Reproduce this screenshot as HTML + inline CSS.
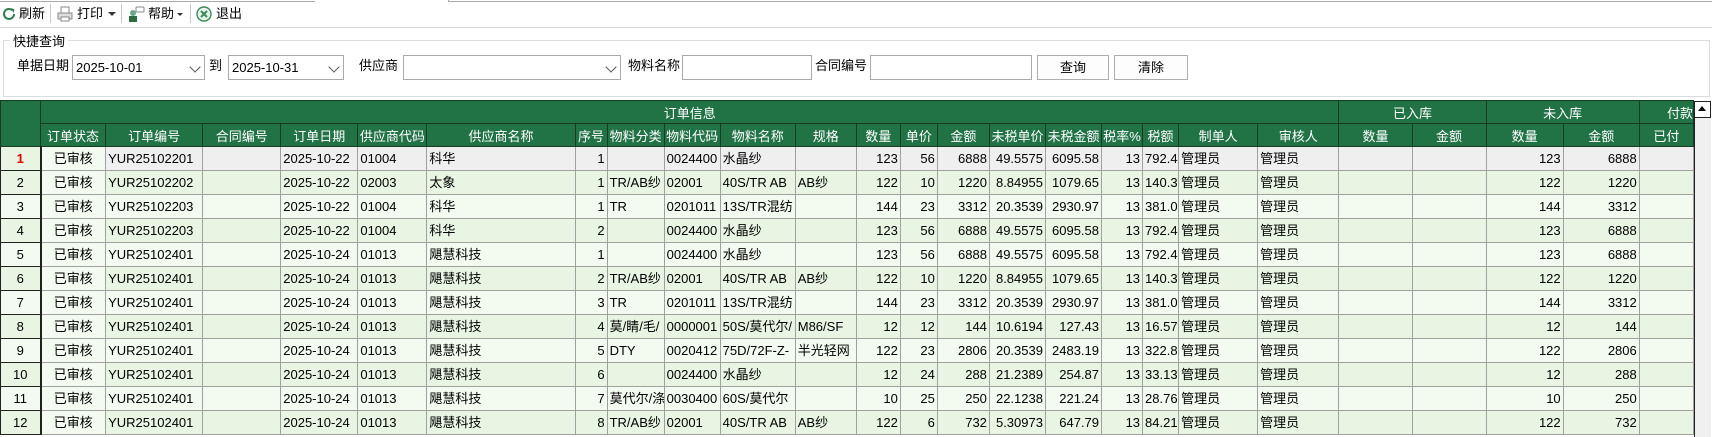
<!DOCTYPE html>
<html><head><meta charset="utf-8"><style>
*{margin:0;padding:0;box-sizing:border-box}
body{width:1712px;height:437px;overflow:hidden;background:#fff;font-family:"Liberation Sans","Noto Sans CJK SC",sans-serif;font-size:13px;color:#000;position:relative}
.abs{position:absolute}
.tb{top:0;left:0;width:1712px;height:28px;border-bottom:1px solid #d8d8d8}
.tbi{position:absolute;top:5px;font-size:13px;height:18px;line-height:18px}
.sep{position:absolute;top:4px;width:1px;height:19px;background:#c8c8c8}
.grp{left:3px;top:40px;width:1707px;height:57px;border:1px solid #dcdcdc}
.gl{left:10px;top:31px;background:#fff;padding:0 3px;font-size:13px}
.lbl{top:57px;font-size:13px;line-height:18px}
.inp{top:55px;height:25px;border:1px solid #aaa;background:#fff;font-size:13px;line-height:23px;padding-left:3px}
.dd{position:absolute;right:5px;top:7px;width:8px;height:8px;border-right:1px solid #555;border-bottom:1px solid #555;transform:rotate(45deg)}
.btn{top:55px;height:25px;border:1px solid #adadad;background:#fdfdfd;text-align:center;line-height:23px;font-size:13px}
table{position:absolute;left:0;top:100px;border-collapse:collapse;table-layout:fixed;width:1694px}
td{height:24px;border:1px solid #a0a0a0;white-space:nowrap;overflow:hidden;padding:0 2px;font-size:13px;line-height:22px}
th{background:#217346;color:#fff;font-weight:normal;border:1px solid #163c24;font-size:13px;height:23px;white-space:nowrap;overflow:hidden}
td.rh{border:1px solid #222;border-right:2px solid #222;background:#e8f5e3;text-align:center}
td.c{text-align:center}
td.r{text-align:right}
tr.a td{background:#e8f5e3}
tr.b td{background:#f3faf0}
tr.g td{background:#efefef}
tr td.st{background:#f3faf0}
tr.g td.rh{background:#e8f5e3;color:#e00000;font-weight:bold}
</style></head><body>
<div class="abs" style="top:0;left:0;width:315px;height:2px;border-bottom:1px solid #aaa"></div>
<div class="abs" style="top:0;left:448px;width:1264px;height:2px;border-bottom:1px solid #aaa;border-left:1px solid #aaa"></div>
<div class="abs tb"></div>
<svg class="abs" style="left:2px;top:7px" width="14" height="14" viewBox="0 0 14 14"><path d="M12 7a5 5 0 1 1-1.6-3.7" fill="none" stroke="#2e7d4e" stroke-width="2"/><path d="M9 1l3.5 1.5-1 3.5z" fill="#2e7d4e"/></svg>
<div class="tbi" style="left:19px">刷新</div>
<div class="sep" style="left:50px"></div>
<svg class="abs" style="left:57px;top:6px" width="16" height="16" viewBox="0 0 16 16"><rect x="4" y="1" width="8" height="6" fill="#fff" stroke="#888"/><rect x="1" y="7" width="14" height="6" fill="#ddd" stroke="#888"/><rect x="4" y="11" width="8" height="4" fill="#fff" stroke="#888"/></svg>
<div class="tbi" style="left:77px">打印</div>
<div class="abs" style="left:108px;top:12px;border:4px solid transparent;border-top:4px solid #333"></div>
<div class="sep" style="left:121px"></div>
<svg class="abs" style="left:127px;top:5px" width="18" height="18" viewBox="0 0 18 18"><circle cx="6" cy="8" r="3" fill="#6a8"/><rect x="2" y="11" width="8" height="6" fill="#2e6d44"/><rect x="9" y="2" width="8" height="5" rx="1" fill="#fff" stroke="#888"/></svg>
<div class="tbi" style="left:148px">帮助</div>
<div class="abs" style="left:177px;top:13px;border:3px solid transparent;border-top:3px solid #333"></div>
<div class="sep" style="left:190px"></div>
<svg class="abs" style="left:196px;top:6px" width="16" height="16" viewBox="0 0 16 16"><circle cx="8" cy="8" r="7" fill="#e8f3ec" stroke="#3a8a5a" stroke-width="1.4"/><path d="M5 5l6 6M11 5l-6 6" stroke="#3a8a5a" stroke-width="2"/></svg>
<div class="tbi" style="left:216px">退出</div>

<div class="abs grp"></div>
<div class="abs gl">快捷查询</div>
<div class="abs lbl" style="left:17px">单据日期</div>
<div class="abs inp" style="left:72px;width:133px">2025-10-01<span class="dd"></span></div>
<div class="abs lbl" style="left:209px">到</div>
<div class="abs inp" style="left:228px;width:116px">2025-10-31<span class="dd"></span></div>
<div class="abs lbl" style="left:359px">供应商</div>
<div class="abs inp" style="left:403px;width:218px"><span class="dd"></span></div>
<div class="abs lbl" style="left:628px">物料名称</div>
<div class="abs inp" style="left:682px;width:130px"></div>
<div class="abs lbl" style="left:815px">合同编号</div>
<div class="abs inp" style="left:870px;width:162px"></div>
<div class="abs btn" style="left:1037px;width:72px">查询</div>
<div class="abs btn" style="left:1114px;width:74px">清除</div>

<table>
<colgroup><col style="width:40px"><col style="width:65px"><col style="width:97px"><col style="width:78px"><col style="width:77px"><col style="width:69px"><col style="width:148px"><col style="width:32px"><col style="width:57px"><col style="width:56px"><col style="width:75px"><col style="width:61px"><col style="width:44px"><col style="width:37px"><col style="width:52px"><col style="width:56px"><col style="width:56px"><col style="width:41px"><col style="width:36px"><col style="width:79px"><col style="width:81px"><col style="width:73px"><col style="width:74px"><col style="width:77px"><col style="width:76px"><col style="width:54px"></colgroup>
<tr><th rowspan="2"></th><th colspan="20">订单信息</th><th colspan="2">已入库</th><th colspan="2">未入库</th><th style="text-align:right">付款</th></tr>
<tr><th>订单状态</th><th>订单编号</th><th>合同编号</th><th>订单日期</th><th>供应商代码</th><th>供应商名称</th><th>序号</th><th>物料分类</th><th>物料代码</th><th>物料名称</th><th>规格</th><th>数量</th><th>单价</th><th>金额</th><th>未税单价</th><th>未税金额</th><th>税率%</th><th>税额</th><th>制单人</th><th>审核人</th><th>数量</th><th>金额</th><th>数量</th><th>金额</th><th>已付</th></tr>
<tr class="g"><td class="rh">1</td><td class="c st">已审核</td><td>YUR25102201</td><td></td><td>2025-10-22</td><td>01004</td><td>科华</td><td class="r">1</td><td></td><td>0024400</td><td>水晶纱</td><td></td><td class="r">123</td><td class="r">56</td><td class="r">6888</td><td class="r">49.5575</td><td class="r">6095.58</td><td class="r">13</td><td class="r">792.4</td><td>管理员</td><td>管理员</td><td></td><td></td><td class="r">123</td><td class="r">6888</td><td></td></tr>
<tr class="a"><td class="rh">2</td><td class="c st">已审核</td><td>YUR25102202</td><td></td><td>2025-10-22</td><td>02003</td><td>太象</td><td class="r">1</td><td>TR/AB纱</td><td>02001</td><td>40S/TR AB</td><td>AB纱</td><td class="r">122</td><td class="r">10</td><td class="r">1220</td><td class="r">8.84955</td><td class="r">1079.65</td><td class="r">13</td><td class="r">140.3</td><td>管理员</td><td>管理员</td><td></td><td></td><td class="r">122</td><td class="r">1220</td><td></td></tr>
<tr class="b"><td class="rh">3</td><td class="c st">已审核</td><td>YUR25102203</td><td></td><td>2025-10-22</td><td>01004</td><td>科华</td><td class="r">1</td><td>TR</td><td>0201011</td><td>13S/TR混纺</td><td></td><td class="r">144</td><td class="r">23</td><td class="r">3312</td><td class="r">20.3539</td><td class="r">2930.97</td><td class="r">13</td><td class="r">381.0</td><td>管理员</td><td>管理员</td><td></td><td></td><td class="r">144</td><td class="r">3312</td><td></td></tr>
<tr class="a"><td class="rh">4</td><td class="c st">已审核</td><td>YUR25102203</td><td></td><td>2025-10-22</td><td>01004</td><td>科华</td><td class="r">2</td><td></td><td>0024400</td><td>水晶纱</td><td></td><td class="r">123</td><td class="r">56</td><td class="r">6888</td><td class="r">49.5575</td><td class="r">6095.58</td><td class="r">13</td><td class="r">792.4</td><td>管理员</td><td>管理员</td><td></td><td></td><td class="r">123</td><td class="r">6888</td><td></td></tr>
<tr class="b"><td class="rh">5</td><td class="c st">已审核</td><td>YUR25102401</td><td></td><td>2025-10-24</td><td>01013</td><td>飓慧科技</td><td class="r">1</td><td></td><td>0024400</td><td>水晶纱</td><td></td><td class="r">123</td><td class="r">56</td><td class="r">6888</td><td class="r">49.5575</td><td class="r">6095.58</td><td class="r">13</td><td class="r">792.4</td><td>管理员</td><td>管理员</td><td></td><td></td><td class="r">123</td><td class="r">6888</td><td></td></tr>
<tr class="a"><td class="rh">6</td><td class="c st">已审核</td><td>YUR25102401</td><td></td><td>2025-10-24</td><td>01013</td><td>飓慧科技</td><td class="r">2</td><td>TR/AB纱</td><td>02001</td><td>40S/TR AB</td><td>AB纱</td><td class="r">122</td><td class="r">10</td><td class="r">1220</td><td class="r">8.84955</td><td class="r">1079.65</td><td class="r">13</td><td class="r">140.3</td><td>管理员</td><td>管理员</td><td></td><td></td><td class="r">122</td><td class="r">1220</td><td></td></tr>
<tr class="b"><td class="rh">7</td><td class="c st">已审核</td><td>YUR25102401</td><td></td><td>2025-10-24</td><td>01013</td><td>飓慧科技</td><td class="r">3</td><td>TR</td><td>0201011</td><td>13S/TR混纺</td><td></td><td class="r">144</td><td class="r">23</td><td class="r">3312</td><td class="r">20.3539</td><td class="r">2930.97</td><td class="r">13</td><td class="r">381.0</td><td>管理员</td><td>管理员</td><td></td><td></td><td class="r">144</td><td class="r">3312</td><td></td></tr>
<tr class="a"><td class="rh">8</td><td class="c st">已审核</td><td>YUR25102401</td><td></td><td>2025-10-24</td><td>01013</td><td>飓慧科技</td><td class="r">4</td><td>莫/睛/毛/</td><td>0000001</td><td>50S/莫代尔/</td><td>M86/SF</td><td class="r">12</td><td class="r">12</td><td class="r">144</td><td class="r">10.6194</td><td class="r">127.43</td><td class="r">13</td><td class="r">16.57</td><td>管理员</td><td>管理员</td><td></td><td></td><td class="r">12</td><td class="r">144</td><td></td></tr>
<tr class="b"><td class="rh">9</td><td class="c st">已审核</td><td>YUR25102401</td><td></td><td>2025-10-24</td><td>01013</td><td>飓慧科技</td><td class="r">5</td><td>DTY</td><td>0020412</td><td>75D/72F-Z-</td><td>半光轻网</td><td class="r">122</td><td class="r">23</td><td class="r">2806</td><td class="r">20.3539</td><td class="r">2483.19</td><td class="r">13</td><td class="r">322.8</td><td>管理员</td><td>管理员</td><td></td><td></td><td class="r">122</td><td class="r">2806</td><td></td></tr>
<tr class="a"><td class="rh">10</td><td class="c st">已审核</td><td>YUR25102401</td><td></td><td>2025-10-24</td><td>01013</td><td>飓慧科技</td><td class="r">6</td><td></td><td>0024400</td><td>水晶纱</td><td></td><td class="r">12</td><td class="r">24</td><td class="r">288</td><td class="r">21.2389</td><td class="r">254.87</td><td class="r">13</td><td class="r">33.13</td><td>管理员</td><td>管理员</td><td></td><td></td><td class="r">12</td><td class="r">288</td><td></td></tr>
<tr class="b"><td class="rh">11</td><td class="c st">已审核</td><td>YUR25102401</td><td></td><td>2025-10-24</td><td>01013</td><td>飓慧科技</td><td class="r">7</td><td>莫代尔/涤</td><td>0030400</td><td>60S/莫代尔</td><td></td><td class="r">10</td><td class="r">25</td><td class="r">250</td><td class="r">22.1238</td><td class="r">221.24</td><td class="r">13</td><td class="r">28.76</td><td>管理员</td><td>管理员</td><td></td><td></td><td class="r">10</td><td class="r">250</td><td></td></tr>
<tr class="a"><td class="rh">12</td><td class="c st">已审核</td><td>YUR25102401</td><td></td><td>2025-10-24</td><td>01013</td><td>飓慧科技</td><td class="r">8</td><td>TR/AB纱</td><td>02001</td><td>40S/TR AB</td><td>AB纱</td><td class="r">122</td><td class="r">6</td><td class="r">732</td><td class="r">5.30973</td><td class="r">647.79</td><td class="r">13</td><td class="r">84.21</td><td>管理员</td><td>管理员</td><td></td><td></td><td class="r">122</td><td class="r">732</td><td></td></tr>
</table>
<div class="abs" style="left:1694px;top:101px;width:17px;height:336px;background:#f0f0f0;border-left:1px solid #222"></div>
<div class="abs" style="left:1694px;top:101px;width:17px;height:17px;background:#fff;border:1px solid #222"></div>
<div class="abs" style="left:1698px;top:106px;border:4px solid transparent;border-bottom:5px solid #000;border-top:0"></div>
</body></html>
